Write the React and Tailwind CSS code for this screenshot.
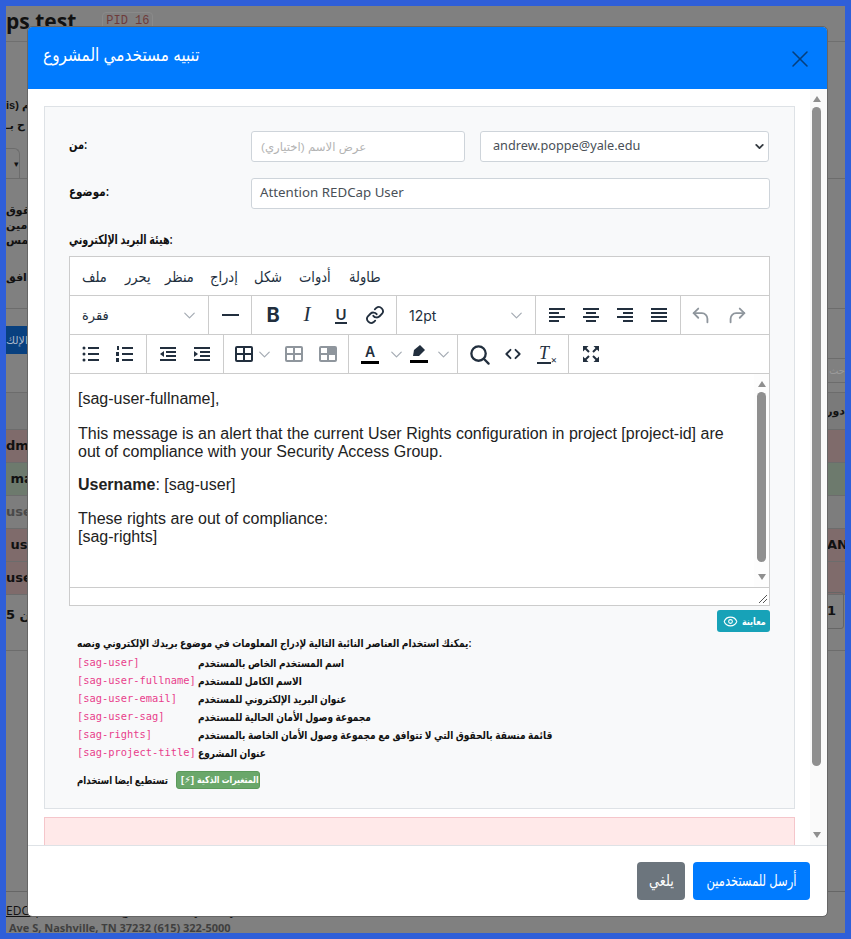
import { Eye, X, ChevronDown } from "lucide-react";

const ARABIC = { fontFamily: '"Liberation Sans", "DejaVu Sans", sans-serif' };

const MENU = [
  ["ملف", "w-[26px]"],
  ["يحرر", "w-[23px]"],
  ["منظر", "w-[28px]"],
  ["إدراج", "w-[27px]"],
  ["شكل", "w-[28px]"],
  ["أدوات", "w-[33px]"],
  ["طاولة", "w-[32px]"],
];

const PLACEHOLDERS = [
  ["[sag-user]", "اسم المستخدم الخاص بالمستخدم"],
  ["[sag-user-fullname]", "الاسم الكامل للمستخدم"],
  ["[sag-user-email]", "عنوان البريد الإلكتروني للمستخدم"],
  ["[sag-user-sag]", "مجموعة وصول الأمان الحالية للمستخدم"],
  ["[sag-rights]", "قائمة منسقة بالحقوق التي لا تتوافق مع مجموعة وصول الأمان الخاصة بالمستخدم"],
  ["[sag-project-title]", "عنوان المشروع"],
];

function Tool({ children, w = "w-[36px]", dim = false }) {
  return (
    <span className={`flex h-[24px] items-center justify-center ${w} ${dim ? "text-[#8f969d]" : "text-[#222f3e]"}`}>
      {children}
    </span>
  );
}

function Chevron() {
  return <ChevronDown className="h-[19px] w-[19px] text-[#a4abb3]" strokeWidth={1.5} />;
}

function Group({ children, className = "" }) {
  return <div className={`flex h-full items-center border-r border-[#cccccc] ${className}`}>{children}</div>;
}

function Svg({ children }) {
  return (
    <svg width="24" height="24" viewBox="0 0 24 24" fill="currentColor">
      {children}
    </svg>
  );
}

function Bars({ rows }) {
  return (
    <Svg>
      {rows.map(([x, y, w], i) => (
        <rect key={i} x={x} y={y} width={w} height="2" />
      ))}
    </Svg>
  );
}

function TableIcon({ head }) {
  return (
    <svg width="18" height="16" viewBox="0 0 18 16">
      <rect width="18" height="16" rx="2" fill="currentColor" />
      <rect x="2" y="2" width="6" height="5" fill="#fff" />
      {!head && <rect x="10" y="2" width="6" height="5" fill="#fff" />}
      <rect x="2" y="9" width="6" height="5" fill="#fff" />
      <rect x="10" y="9" width="6" height="5" fill="#fff" />
    </svg>
  );
}

function Toolbar() {
  return (
    <>
      <div className="flex h-[39px] items-center gap-[17px] border-b border-[#cccccc] pt-[3px] pl-[12px] text-[#222f3e]">
        {MENU.map(([m, w]) => (
          <span key={m} className={`${w} origin-left scale-x-[.87] text-[15px] whitespace-nowrap`} style={ARABIC}>{m}</span>
        ))}
      </div>
      <div className="flex h-[39px] items-center border-b border-[#cccccc]">
        <Group className="w-[139px] justify-between pr-[9px] pl-[12px]">
          <span className="pt-[2px] text-[13px] text-[#222f3e]" style={ARABIC}>فقرة</span>
          <Chevron />
        </Group>
        <Group className="w-[43px] justify-center">
          <Tool><span className="h-[2px] w-[17px] bg-[#222f3e]" /></Tool>
        </Group>
        <Group className="w-[145px] justify-center px-[4px]">
          <Tool><span className="text-[20px] font-bold" style={{ fontFamily: "Inter, sans-serif" }}>B</span></Tool>
          <Tool><span className="text-[21px] italic" style={{ fontFamily: '"Liberation Serif", serif' }}>I</span></Tool>
          <Tool>
            <span className="border-b-2 border-[#222f3e] text-[15px] leading-[15px] font-semibold" style={{ fontFamily: "Inter, sans-serif" }}>U</span>
          </Tool>
          <Tool>
            <svg width="20" height="20" viewBox="0 0 24 24" fill="none" stroke="currentColor" strokeWidth="2.2" strokeLinecap="round">
              <path d="M10 13a5 5 0 0 0 7.500.5l3-3a5 5 0 0 0-7-7l-1.700 1.700" />
              <path d="M14 11a5 5 0 0 0-7.500-.5l-3 3a5 5 0 0 0 7 7l1.700-1.700" />
            </svg>
          </Tool>
        </Group>
        <Group className="w-[139px] justify-between pr-[9px] pl-[12px]">
          <span className="text-[14px] text-[#222f3e]" style={{ fontFamily: "Inter, sans-serif" }}>12pt</span>
          <Chevron />
        </Group>
        <Group className="w-[145px] justify-center">
          <Tool w="w-[34px]"><Bars rows={[[4, 5, 16], [4, 9, 10], [4, 13, 16], [4, 17, 10]]} /></Tool>
          <Tool w="w-[34px]"><Bars rows={[[4, 5, 16], [7, 9, 10], [4, 13, 16], [7, 17, 10]]} /></Tool>
          <Tool w="w-[34px]"><Bars rows={[[4, 5, 16], [10, 9, 10], [4, 13, 16], [10, 17, 10]]} /></Tool>
          <Tool w="w-[34px]"><Bars rows={[[4, 5, 16], [4, 9, 16], [4, 13, 16], [4, 17, 16]]} /></Tool>
        </Group>
        <div className="flex items-center pl-[2px]">
          <Tool dim>
            <svg width="22" height="22" viewBox="0 0 24 24" fill="none" stroke="currentColor" strokeWidth="2" strokeLinecap="round" strokeLinejoin="round">
              <path d="M9 5 4 10l5 5" />
              <path d="M4 10h9a6 6 0 0 1 6 6v4" />
            </svg>
          </Tool>
          <Tool dim>
            <svg width="22" height="22" viewBox="0 0 24 24" fill="none" stroke="currentColor" strokeWidth="2" strokeLinecap="round" strokeLinejoin="round">
              <path d="m15 5 5 5-5 5" />
              <path d="M20 10h-9a6 6 0 0 0-6 6v4" />
            </svg>
          </Tool>
        </div>
      </div>
      <div className="flex h-[39px] items-center border-b border-[#cccccc]">
        <Group className="w-[77px] justify-center">
          <Tool w="w-[34px]">
            <Svg>
              <circle cx="5" cy="6" r="1.500" /><circle cx="5" cy="12" r="1.500" /><circle cx="5" cy="18" r="1.500" />
              <rect x="9" y="5" width="11" height="2" /><rect x="9" y="11" width="11" height="2" /><rect x="9" y="17" width="11" height="2" />
            </Svg>
          </Tool>
          <Tool w="w-[34px]">
            <Svg>
              <rect x="4" y="4" width="2" height="4" /><rect x="3" y="10" width="3" height="4" /><rect x="3" y="16" width="3" height="4" />
              <rect x="9" y="5" width="11" height="2" /><rect x="9" y="11" width="11" height="2" /><rect x="9" y="17" width="11" height="2" />
            </Svg>
          </Tool>
        </Group>
        <Group className="w-[77px] justify-center">
          <Tool w="w-[34px]">
            <Svg>
              <rect x="4" y="5" width="16" height="2" /><rect x="10" y="9" width="10" height="2" /><rect x="10" y="13" width="10" height="2" /><rect x="4" y="17" width="16" height="2" />
              <path d="M8 9v6l-4-3z" />
            </Svg>
          </Tool>
          <Tool w="w-[34px]">
            <Svg>
              <rect x="4" y="5" width="16" height="2" /><rect x="10" y="9" width="10" height="2" /><rect x="10" y="13" width="10" height="2" /><rect x="4" y="17" width="16" height="2" />
              <path d="M4 9v6l4-3z" />
            </Svg>
          </Tool>
        </Group>
        <Group className="w-[125px] pl-[11px]">
          <span className="flex w-[18px] text-[#222f3e]"><TableIcon /></span>
          <span className="ml-[2px]"><Chevron /></span>
          <span className="ml-[11px] flex w-[18px] text-[#8f969d]"><TableIcon /></span>
          <span className="ml-[16px] flex w-[18px] text-[#8f969d]"><TableIcon head /></span>
        </Group>
        <Group className="w-[109px] pl-[12px]">
          <span className="flex h-[24px] w-[18px] flex-col items-center text-[#222f3e]">
            <span className="text-[14px] leading-[19px] font-semibold" style={{ fontFamily: "Inter, sans-serif" }}>A</span>
            <span className="h-[3px] w-[18px] bg-black" />
          </span>
          <span className="ml-[8px]"><Chevron /></span>
          <span className="ml-[4px] flex text-[#222f3e]">
            <svg width="18" height="22" viewBox="0 0 18 22" fill="currentColor">
              <path d="M10 2l5 5-6 6H3l1-6z" />
              <rect y="17" width="18" height="3" fill="#000" />
            </svg>
          </span>
          <span className="ml-[6px]"><Chevron /></span>
        </Group>
        <Group className="w-[111px] justify-center">
          <Tool w="w-[34px]">
            <svg width="23" height="23" viewBox="0 0 24 24" fill="none" stroke="currentColor" strokeWidth="2.400" strokeLinecap="round">
              <circle cx="11" cy="11" r="7.500" />
              <path d="m17 17 4.500 4.500" />
            </svg>
          </Tool>
          <Tool w="w-[34px]">
            <svg width="20" height="20" viewBox="0 0 24 24" fill="none" stroke="currentColor" strokeWidth="2.200" strokeLinecap="round" strokeLinejoin="round">
              <path d="m9 7-5 5 5 5M15 7l5 5-5 5" />
            </svg>
          </Tool>
          <Tool w="w-[34px]">
            <span className="relative flex flex-col items-center pr-[6px]">
              <span className="text-[18px] leading-[17px] italic" style={{ fontFamily: '"Liberation Serif", serif' }}>T</span>
              <span className="h-[2px] w-[14px] bg-[#222f3e]" />
              <span className="absolute right-0 bottom-0 text-[10px] leading-[10px]" style={{ fontFamily: "Inter, sans-serif" }}>×</span>
            </span>
          </Tool>
        </Group>
        <div className="pl-[4px]">
          <Tool>
            <svg width="16" height="16" viewBox="0 0 16 16" fill="currentColor" stroke="currentColor">
              <path d="M0 0h5.500L0 5.500zM16 0v5.500L10.500 0zM0 16v-5.500L5.500 16zM16 16h-5.500L16 10.500z" strokeWidth="0" />
              <path d="m2 2 4 4M14 2l-4 4M2 14l4-4M14 14l-4-4" strokeWidth="2" fill="none" />
            </svg>
          </Tool>
        </div>
      </div>
    </>
  );
}

function EditorBody() {
  return (
    <div className="flex h-[213px] bg-white">
      <div className="flex-1 overflow-hidden px-[8px] pt-[16px] text-[16px] leading-[18px] text-[#222222]" style={{ fontFamily: '"Liberation Sans", Arial, sans-serif' }}>
        <p>[sag-user-fullname],</p>
        <p className="mt-[17px]">
          This message is an alert that the current User Rights configuration in project [project-id] are out of compliance with your Security Access Group.
        </p>
        <p className="mt-[15px]"><b>Username</b>: [sag-user]</p>
        <p className="mt-[16px]">These rights are out of compliance:<br />[sag-rights]</p>
      </div>
      <Scrollbar className="w-[15px] bg-[#fdfdfd]" thumb="h-[170px]" />
    </div>
  );
}

// thin native-looking scrollbar; thumb height is passed in
function Scrollbar({ className = "", thumb }) {
  return (
    <div className={`flex h-full flex-col items-center pt-[7px] ${className}`}>
      <span className="h-0 w-0 border-x-[4px] border-b-[6px] border-x-transparent border-b-[#8f8f8f]" />
      <span className={`mt-[5px] w-[9px] rounded-full bg-[#8f8f8f] ${thumb}`} />
      <span className="flex-1" />
      <span className="mb-[7px] h-0 w-0 border-x-[4px] border-t-[6px] border-x-transparent border-t-[#8f8f8f]" />
    </div>
  );
}

function BehindRow({ bg, left, right, dim }) {
  return (
    <div className={`flex h-[33px] shrink-0 items-center justify-between overflow-hidden border-b border-[#6c6c6c] text-[13px] font-bold ${bg} ${dim ? "text-[#4a4a4a]" : ""}`} style={{ fontFamily: '"DejaVu Sans", sans-serif' }}>
      <span className="whitespace-pre">{left}</span>
      {right && <span className="w-[18px] overflow-hidden">{right}</span>}
    </div>
  );
}

function PageBehind() {
  return (
    <div className="flex h-full flex-col overflow-hidden bg-[#808080] text-[#111]">
      <div className="flex h-[36px] shrink-0 items-center border-b border-[#6f6f6f]">
        <span className="-mt-[6px] text-[21px] leading-[28px] font-bold" style={{ fontFamily: '"Open Sans", sans-serif' }}>ps test</span>
        <span className="-mt-[6px] ml-[26px] rounded-[4px] border border-[#8a8a8a] px-[3px] py-[1px] text-[12px] leading-[14px] text-[#6e3b3b]" style={{ fontFamily: '"Liberation Mono", monospace' }}>PID 16</span>
      </div>
      <div className="h-[106px] shrink-0 pt-[53px] text-[11px] leading-[20px] font-bold" style={ARABIC}>
        <div>is) م</div>
        <div>ح بـ</div>
      </div>
      <div className="flex h-[31px] shrink-0 border-b border-[#6c6c6c]">
        <span className="h-[31px] w-[14px] rounded-tr-[6px] border-t border-r border-[#6c6c6c] pt-[8px] text-right text-[9px]">▾</span>
      </div>
      <div className="h-[130px] shrink-0 border-b border-[#6c6c6c] pt-[24px] text-[11px] leading-[15px] font-bold" style={ARABIC}>
        <div>حقوق</div>
        <div>مين</div>
        <div>للمس</div>
        <div className="mt-[22px]">افق.</div>
      </div>
      <div className="flex h-[84px] shrink-0 items-start justify-between border-b border-[#6c6c6c] pt-[17px]">
        <span className="flex h-[28px] w-[30px] items-center overflow-hidden bg-[#08407f] text-[11px] whitespace-nowrap text-[#aab7c9]" style={ARABIC}>الإلك</span>
        <span className="mt-[32px] flex h-[25px] w-[19px] items-center justify-end overflow-hidden border-y border-[#6c6c6c] text-[10px] text-[#9a9a9a]" style={ARABIC}>حث</span>
      </div>
      <div className="flex h-[37px] shrink-0 items-center justify-end border-b border-[#6c6c6c] bg-[#7a7a7a] text-[11px] font-bold" style={ARABIC}>
        <span>دور</span>
      </div>
      <BehindRow bg="bg-[#7f6b6b]" left="dmi" />
      <BehindRow bg="bg-[#6d7a6d]" left=" mar" />
      <BehindRow bg="bg-[#7d7d7d]" left="user" dim />
      <BehindRow bg="bg-[#7f6b6b]" left=" use" right="AN&" />
      <BehindRow bg="bg-[#7f6b6b]" left="user" />
      <div className="flex h-[56px] shrink-0 items-start justify-between border-b border-[#6c6c6c] text-[13px] font-bold" style={{ fontFamily: '"DejaVu Sans", sans-serif' }}>
        <span className="mt-[10px]">من 5</span>
        <span className="-mt-[3px] mr-[1px] flex h-[37px] w-[19px] items-center rounded-[3px] border border-[#666] pl-[1px]">1</span>
      </div>
      <div className="flex-1 border-b border-[#666]" />
      <div className="flex h-[41px] shrink-0 flex-col pt-[11px] text-[12px] leading-[16px]" style={{ fontFamily: '"Open Sans", sans-serif' }}>
        <div className="flex whitespace-nowrap text-[#111]">
          <span className="w-[43px] underline">EDCap</span>
          <span className="ml-[12px] w-[32px] underline">Terms</span>
          <span className="ml-[16px] w-[33px] underline">Legal</span>
          <span className="ml-[19px] w-[70px] underline">Privacy Policy</span>
          <span className="ml-[18px] w-[28px] underline">Links</span>
        </div>
        <div className="mt-[2px] pl-[3px] text-[11px] leading-[13px] font-bold whitespace-nowrap text-[#3f3f3f]">
          Ave S, Nashville, TN 37232 (615) 322-5000
        </div>
      </div>
    </div>
  );
}

export default function App() {
  return (
    <div className="relative h-[939px] w-[851px] overflow-hidden bg-[#2f5fd9] p-[6px]">
      <PageBehind />

      {/* modal sits over the dimmed page */}
      <div className="absolute top-[27px] left-[28px] flex h-[889px] w-[799px] flex-col overflow-hidden rounded-[4px] bg-white outline-1 outline-[#666666]">
        <div className="flex h-[62px] shrink-0 items-center justify-between bg-[#007bff] pr-[13px] pl-[15px] text-white">
          <h5 className="-mt-[6px] origin-left scale-x-[.85] text-[18px] whitespace-nowrap" style={ARABIC}>تنبيه مستخدمي المشروع</h5>
          <X className="mt-[2px] h-[28px] w-[28px] text-[#063f7d]" strokeWidth={1.3} />
        </div>

        <div className="flex min-h-0 flex-1">
          <div className="min-w-0 flex-1 overflow-hidden pt-[17px] pl-[16px]">
            <div className="h-[703px] w-[751px] border border-[#dee2e6] bg-[#f8f9fa] pt-[24px] pl-[24px]">
              <div className="flex h-[31px] items-center">
                <label className="-mt-[3px] w-[182px] origin-left scale-x-[.76] text-[13px] font-bold text-[#111]" style={ARABIC}>من:</label>
                <input
                  dir="ltr"
                  placeholder="عرض الاسم (اختياري)"
                  className="h-[31px] w-[214px] rounded-[3px] border border-[#ced4da] bg-white px-[9px] text-[11.700px] placeholder:text-[#b3b3b3]"
                  style={ARABIC}
                  readOnly
                />
                <div className="ml-[15px] flex h-[31px] w-[289px] items-center justify-between rounded-[3px] border border-[#ced4da] bg-white pr-[2px] pb-[1px] pl-[12px]">
                  <span className="text-[12.700px] text-[#495057]" style={{ fontFamily: '"Noto Sans", sans-serif' }}>andrew.poppe@yale.edu</span>
                  <ChevronDown className="h-[13px] w-[13px] text-[#343a40]" strokeWidth={3.400} />
                </div>
              </div>

              <div className="mt-[16px] flex h-[31px] items-center">
                <label className="-mt-[3px] w-[182px] origin-left scale-x-[.8] text-[13px] font-bold text-[#111]" style={ARABIC}>موضوع:</label>
                <div className="flex h-[31px] w-[519px] items-center rounded-[3px] border border-[#ced4da] bg-white px-[8px] pb-[1px] text-[13.300px] text-[#495057]" style={{ fontFamily: '"Noto Sans", sans-serif' }}>
                  Attention REDCap User
                </div>
              </div>

              <label className="mt-[21px] block h-[26px] origin-left scale-x-[.74] text-[13px] font-bold text-[#111]" style={ARABIC}>هيئة البريد الإلكتروني:</label>

              <div className="w-[701px] border border-[#cccccc] bg-white">
                <Toolbar />
                <EditorBody />
                <div className="relative h-[18px] border-t border-[#cccccc] bg-white">
                  <svg className="absolute right-[1px] bottom-[1px]" width="10" height="10" viewBox="0 0 10 10" stroke="#555" strokeWidth="1">
                    <path d="M1 9 9 1M5 9l4-4" />
                  </svg>
                </div>
              </div>

              <div className="flex w-[701px] justify-end pt-[4px]">
                <span className="flex h-[22px] w-[53px] items-center gap-[4px] rounded-[3px] bg-[#17a2b8] pl-[6px] text-white">
                  <Eye className="h-[15px] w-[15px] shrink-0" strokeWidth={1.700} />
                  <span className="origin-left scale-x-[.8] text-[10px] font-bold whitespace-nowrap" style={ARABIC}>معاينة</span>
                </span>
              </div>

              <div className="pt-[3px] pl-[8px] text-[11px] font-bold text-[#111]" style={ARABIC}>
                <p className="h-[19px] origin-left scale-x-[.824] leading-[16px] whitespace-nowrap">يمكنك استخدام العناصر النائبة التالية لإدراج المعلومات في موضوع بريدك الإلكتروني ونصه:</p>
                {PLACEHOLDERS.map(([code, text]) => (
                  <div key={code} className="flex h-[18px] items-center">
                    <code className="w-[121px] shrink-0 text-[10.400px] font-normal whitespace-nowrap text-[#e83e8c]" style={{ fontFamily: '"DejaVu Sans Mono", monospace' }}>{code}</code>
                    <span className="origin-left scale-x-[.82] whitespace-nowrap">{text}</span>
                  </div>
                ))}
                <div className="mt-[9px] flex items-center">
                  <span className="w-[99px] shrink-0 origin-left scale-x-[.78] whitespace-nowrap">تستطيع ايضا استخدام</span>
                  <span className="flex h-[18px] w-[84px] items-center gap-[3px] overflow-hidden rounded-[3px] border border-[#5b9a5b] bg-[#6aa76a] pl-[4px] text-white">
                    <span className="text-[9.500px] whitespace-nowrap">[⚡]</span>
                    <span className="origin-left scale-x-[.82] text-[9.500px] whitespace-nowrap">المتغيرات الذكية</span>
                  </span>
                </div>
              </div>
            </div>
            <div className="mt-[8px] h-[60px] w-[751px] border border-[#f5c6cb] bg-[#ffe9e9]" />
          </div>
          <Scrollbar className="w-[17px] bg-[#fafafa] pr-[4px]" thumb="h-[659px]" />
        </div>

        <div className="flex h-[71px] shrink-0 items-center justify-end gap-[8px] border-t border-[#dee2e6] pr-[17px]">
          <span className="flex h-[38px] w-[48px] items-center justify-center rounded-[4px] bg-[#6c757d] text-white">
            <span className="scale-x-[.8] text-[16px] whitespace-nowrap" style={ARABIC}>يلغي</span>
          </span>
          <span className="flex h-[38px] w-[117px] items-center justify-center rounded-[4px] bg-[#007bff] text-white">
            <span className="scale-x-[.72] text-[16px] whitespace-nowrap" style={ARABIC}>أرسل للمستخدمين</span>
          </span>
        </div>
      </div>
    </div>
  );
}
